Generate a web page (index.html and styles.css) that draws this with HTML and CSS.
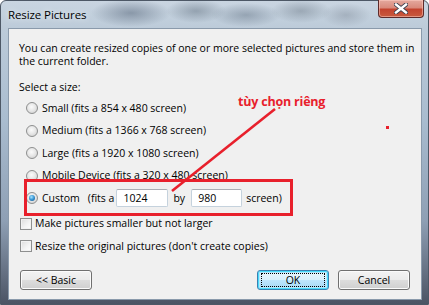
FILE: index.html
```html
<!DOCTYPE html>
<html>
<head>
<meta charset="utf-8">
<link rel="stylesheet" href="styles.css">
</head>
<body>
<div class="window">
  <div class="titlebar">
    <span class="title">Resize Pictures</span>
    <div class="close">
      <svg width="14" height="11" viewBox="0 0 14 11">
        <path d="M2 1.5 L12 9.5 M12 1.5 L2 9.5" stroke="#3a3f4e" stroke-width="4.2" stroke-linecap="square"/>
        <path d="M2 1.5 L12 9.5 M12 1.5 L2 9.5" stroke="#ffffff" stroke-width="2.4" stroke-linecap="square"/>
      </svg>
    </div>
  </div>
  <div class="client">
    <p class="intro">You can create resized copies of one or more selected pictures and store them in<br>the current folder.</p>
    <p class="label">Select a size:</p>
    <div class="options">
      <div class="row"><span class="radio"></span><span>Small (fits a 854 x 480 screen)</span></div>
      <div class="row"><span class="radio"></span><span>Medium (fits a 1366 x 768 screen)</span></div>
      <div class="row"><span class="radio"></span><span>Large (fits a 1920 x 1080 screen)</span></div>
      <div class="row"><span class="radio"></span><span>Mobile Device (fits a 320 x 480 screen)</span></div>
      <div class="row custom">
        <span class="radio checked"></span><span class="custom-label">Custom</span><span class="fits">(fits a</span><span class="input w1">1024</span><span class="by">by</span><span class="input w2">980</span><span class="scr">screen)</span>
      </div>
    </div>
    <div class="checks">
      <div class="row"><span class="check"></span><span>Make pictures smaller but not larger</span></div>
      <div class="row"><span class="check"></span><span>Resize the original pictures (don't create copies)</span></div>
    </div>
    <div class="buttons">
      <button class="btn">&lt;&lt; Basic</button>
      <span class="spacer"></span>
      <button class="btn default"><span class="focus">OK</span></button>
      <button class="btn">Cancel</button>
    </div>
  </div>
  <div class="annot-text">tùy chọn riêng</div>
  <div class="annot-box"></div>
  <div class="annot-dot"></div>
  <svg class="annot-line" width="429" height="305" viewBox="0 0 429 305">
    <line x1="275" y1="109" x2="172" y2="191" stroke="#e8202c" stroke-width="2.6"/>
  </svg>
</div>
</body>
</html>
```

FILE: styles.css
```css
html, body {
  margin: 0;
  padding: 0;
  width: 429px;
  height: 305px;
  overflow: hidden;
}

.window {
  position: relative;
  width: 429px;
  height: 305px;
  box-sizing: border-box;
  font-family: "Open Sans", "Noto Sans", sans-serif;
  color: #000;
  background:
    radial-gradient(ellipse 40px 14px at 130px 12px, rgba(90,105,125,0.55), transparent),
    radial-gradient(ellipse 30px 12px at 195px 10px, rgba(100,115,130,0.5), transparent),
    radial-gradient(ellipse 35px 12px at 245px 14px, rgba(95,110,128,0.45), transparent),
    radial-gradient(ellipse 30px 12px at 300px 10px, rgba(105,118,132,0.45), transparent),
    radial-gradient(ellipse 25px 12px at 345px 14px, rgba(120,130,145,0.4), transparent),
    linear-gradient(to bottom, #c9d5e1 0px, #bccbd9 28px, #a9bccf 120px, #8e9fb4 220px, #4a5262 305px);
  border: 1px solid #4d5866;
  border-radius: 6px 6px 0 0;
}

.titlebar {
  height: 27px;
  display: flex;
  align-items: flex-start;
  justify-content: space-between;
}

.title {
  font-family: "Open Sans", "Noto Sans", sans-serif;
  font-size: 11.5px;
  line-height: 14px;
  margin: 7px 0 0 7px;
  color: #000;
  text-shadow: 0 0 6px rgba(255,255,255,0.9);
  letter-spacing: -0.1px;
}

.close {
  width: 46px;
  height: 18px;
  margin-right: 4px;
  margin-top: -1px;
  box-sizing: border-box;
  border: 1px solid #5d2a2a;
  border-top: none;
  border-radius: 0 0 4px 4px;
  background: linear-gradient(to bottom, #e4a99f 0%, #d98a7c 45%, #c3432f 55%, #c85a3e 100%);
  box-shadow: inset 0 0 0 1px rgba(255,210,200,0.5);
  display: flex;
  align-items: center;
  justify-content: center;
}

.client {
  margin-left: 7px;
  width: 414px;
  height: 272px;
  box-sizing: border-box;
  background: #f0f0f0;
  border: 1px solid #8a9aab;
  padding: 13px 10px 0 10px;
  font-size: 10.5px;
  line-height: 13px;
  letter-spacing: 0;
  white-space: nowrap;
}

.intro, .label {
  margin: 0;
}

.label {
  margin-top: 13px;
}

.options {
  margin-top: 3px;
  margin-left: 7px;
}

.row {
  height: 22.5px;
  display: flex;
  align-items: center;
}

.radio {
  width: 12px;
  height: 12px;
  box-sizing: border-box;
  border-radius: 50%;
  border: 1px solid #8e8f8f;
  background: radial-gradient(circle at 45% 40%, #fbfbfb 0%, #e8e8e8 45%, #c9c9c9 100%);
  margin-right: 4px;
  flex: none;
  position: relative;
}

.radio.checked::after {
  content: "";
  position: absolute;
  left: 2px;
  top: 2px;
  width: 6px;
  height: 6px;
  border-radius: 50%;
  background: radial-gradient(circle at 40% 35%, #a8e4ff 0%, #3c9ad8 45%, #0f4a80 100%);
}

.custom-label {
  margin-right: 8px;
}

.fits {
  margin-right: 2px;
}

.input {
  height: 18px;
  box-sizing: border-box;
  background: #fff;
  border: 1px solid #c5d2dd;
  border-top-color: #abadb3;
  border-radius: 2px;
  padding-left: 6px;
  display: flex;
  align-items: center;
}

.w1 { width: 52px; }
.w2 { width: 51px; }

.by {
  margin: 0 6px 0 5px;
}

.scr {
  margin-left: 4px;
}

.checks {
  margin-top: 3px;
  margin-left: 1px;
}

.check {
  width: 12px;
  height: 12px;
  box-sizing: border-box;
  border: 1px solid #8e8f8f;
  background: linear-gradient(135deg, #dcdcdc 0%, #f4f4f4 60%, #fdfdfd 100%);
  box-shadow: inset 0 0 0 1px #f2f2f2;
  margin-right: 3px;
  flex: none;
}

.buttons {
  display: flex;
  margin-top: 12px;
  margin-left: 1px;
  margin-right: 1px;
}

.spacer {
  flex: 1;
}

.btn {
  width: 72px;
  height: 20px;
  box-sizing: border-box;
  font-family: "Open Sans", "Noto Sans", sans-serif;
  font-size: 10.5px;
  color: #000;
  padding: 0;
  border: 1px solid #707070;
  border-radius: 3px;
  background: linear-gradient(to bottom, #f3f3f3 0%, #ebebeb 49%, #dddddd 51%, #cfcfcf 100%);
  box-shadow: inset 0 0 0 1px #fbfbfb;
  display: flex;
  align-items: center;
  justify-content: center;
}

.btn.default {
  margin-right: 9px;
  border-color: #3c7fb1;
  box-shadow: inset 0 0 0 1px #48dbfb, inset 0 0 0 2px #b6e6fb;
  background: linear-gradient(to bottom, #eaf6fd 0%, #d9f0fc 49%, #bee6fd 51%, #a7d9f5 100%);
}

.focus {
  display: flex;
  align-items: center;
  justify-content: center;
  width: 64px;
  height: 14px;
  box-sizing: border-box;
  border: 1px dotted #000;
}

.annot-text {
  position: absolute;
  left: 237px;
  top: 93px;
  font-family: "Open Sans", "Noto Sans", sans-serif;
  font-weight: 700;
  font-size: 12.5px;
  line-height: 16px;
  color: #e8202c;
  letter-spacing: -0.2px;
}

.annot-box {
  position: absolute;
  left: 23px;
  top: 178px;
  width: 269px;
  height: 37px;
  box-sizing: border-box;
  border: 3px solid #e8202c;
}

.annot-dot {
  position: absolute;
  left: 385px;
  top: 125px;
  width: 3px;
  height: 3px;
  background: #e8202c;
}

.annot-line {
  position: absolute;
  left: -1px;
  top: -1px;
  pointer-events: none;
}
```
